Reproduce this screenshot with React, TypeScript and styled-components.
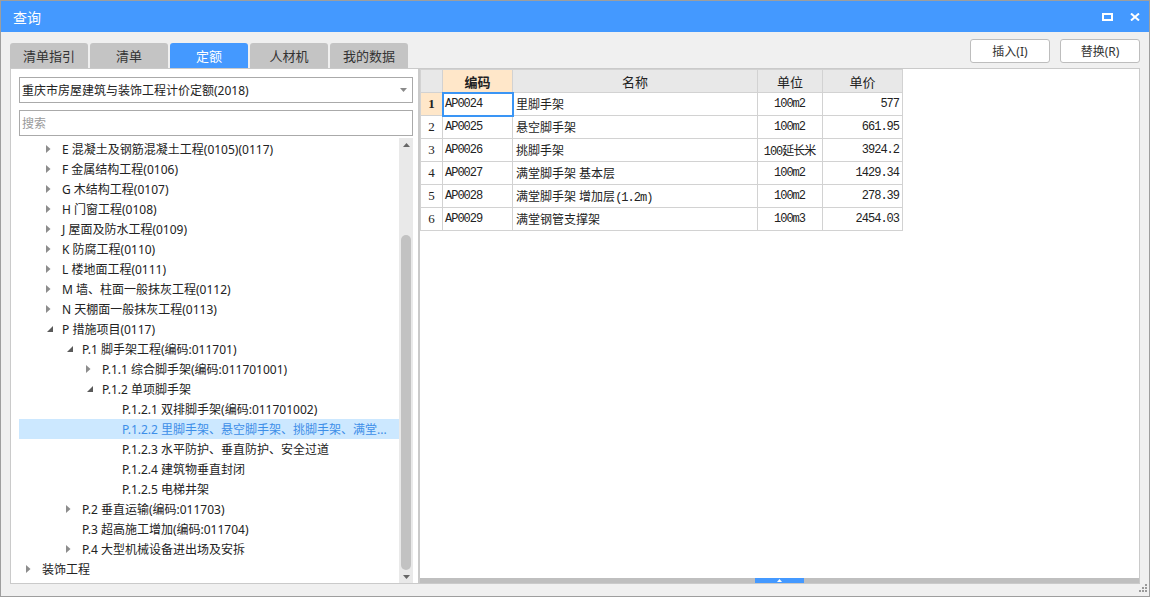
import React from "react";
import styled, { createGlobalStyle } from "styled-components";

const SANS = `"Noto Sans", "Noto Sans CJK SC", sans-serif`;
const MONO = `"Liberation Mono", "Noto Sans CJK SC", monospace`;

const GlobalStyle = createGlobalStyle`
  html, body {
    margin: 0;
    padding: 0;
    background: #ffffff;
  }
`;

const Window = styled.div`
  position: relative;
  width: 1150px;
  height: 597px;
  box-sizing: border-box;
  border: 1px solid #9e9e9e;
  background: #f0f0f0;
  display: flex;
  flex-direction: column;
  font-family: ${SANS};
  font-size: 12px;
  color: #333333;
`;

const TitleBar = styled.div`
  height: 31px;
  flex: none;
  background: #4499ff;
  color: #ffffff;
  display: flex;
  align-items: center;
  justify-content: space-between;
  padding: 0 9px 0 12px;
  font-size: 14px;
`;

const TitleButtons = styled.div`
  display: flex;
  align-items: center;
  gap: 17px;
`;

const Body = styled.div`
  flex: 1;
  min-height: 0;
  display: grid;
  grid-template-columns: 409px 721px;
  grid-template-rows: 36px 1fr;
  padding: 0 9px 12px 9px;
`;

const TabStrip = styled.div`
  align-self: end;
  display: flex;
  gap: 2px;
`;

const Tab = styled.div<{ $active?: boolean }>`
  width: 78px;
  height: 25px;
  border-radius: 3px 3px 0 0;
  background: ${(p) => (p.$active ? "#4499ff" : "#c4c4c4")};
  color: ${(p) => (p.$active ? "#ffffff" : "#333333")};
  display: flex;
  align-items: center;
  justify-content: center;
  font-size: 13px;
`;

const Toolbar = styled.div`
  display: flex;
  justify-content: flex-end;
  align-items: flex-start;
  gap: 10px;
  padding-top: 7px;
`;

const Button = styled.button`
  width: 80px;
  height: 24px;
  box-sizing: border-box;
  border: 1px solid #bdbdbd;
  border-radius: 3px;
  background: #ffffff;
  font-family: ${SANS};
  font-size: 12px;
  color: #333333;
  padding: 0;
`;

const LeftPanel = styled.div`
  box-sizing: border-box;
  min-height: 0;
  border: 1px solid #cacaca;
  background: #ffffff;
  padding: 8px 5px 0 8px;
  display: flex;
  flex-direction: column;
  overflow: hidden;
`;

const Select = styled.div`
  height: 26px;
  flex: none;
  box-sizing: border-box;
  border: 1px solid #aaaaaa;
  display: flex;
  align-items: center;
  justify-content: space-between;
  padding: 0 5px 0 2px;
  font-size: 12px;
  color: #222222;
`;

const Search = styled.input`
  height: 26px;
  flex: none;
  margin-top: 7px;
  box-sizing: border-box;
  width: 100%;
  border: 1px solid #aaaaaa;
  padding: 0 2px;
  font-family: ${SANS};
  font-size: 12px;
  outline: none;
  &::placeholder {
    color: #9a9a9a;
  }
`;

const TreeWrap = styled.div`
  flex: 1;
  min-height: 0;
  margin-top: 2px;
  display: flex;
`;

const TreeList = styled.div`
  flex: 1;
  min-width: 0;
  padding-top: 1px;
  overflow: hidden;
`;

const TreeRow = styled.div<{ $level: number; $selected?: boolean }>`
  height: 20px;
  display: flex;
  align-items: center;
  padding-left: ${(p) => 7 + p.$level * 20}px;
  background: ${(p) => (p.$selected ? "#cce8ff" : "transparent")};
  color: ${(p) => (p.$selected ? "#3d8ee8" : "#222222")};
  white-space: nowrap;
  font-size: 12px;
`;

const Arrow = styled.span`
  width: 16px;
  flex: none;
  display: flex;
  align-items: center;
`;

const VScroll = styled.div`
  width: 14px;
  flex: none;
  background: #e9e9e9;
  display: flex;
  flex-direction: column;
  align-items: center;
`;

const ScrollArrow = styled.div`
  height: 13px;
  flex: none;
  display: flex;
  align-items: center;
  justify-content: center;
`;

const VThumb = styled.div`
  width: 10px;
  flex: 1;
  margin-top: 84px;
  border-radius: 5px;
  background: #c2c2c2;
`;

const RightPanel = styled.div`
  box-sizing: border-box;
  min-height: 0;
  border: 1px solid #cacaca;
  background: #ffffff;
  display: flex;
  flex-direction: column;
`;

const GridArea = styled.div`
  flex: 1;
  min-height: 0;
  overflow: hidden;
`;

const HScroll = styled.div`
  height: 5px;
  flex: none;
  background: #bfbfbf;
  display: flex;
`;

const HThumb = styled.div`
  width: 49px;
  background: #4499ff;
  display: flex;
  align-items: center;
  justify-content: center;
`;

const Table = styled.table`
  border-collapse: collapse;
  table-layout: fixed;
  width: 482px;
`;

const Row = styled.tr`
  height: 23px;
`;

const HeadCell = styled.th<{ $key?: boolean }>`
  border: 1px solid #d2d2d2;
  background: ${(p) => (p.$key ? "#ffe7c9" : "#e8e8e8")};
  font-weight: ${(p) => (p.$key ? 700 : 400)};
  font-size: 13px;
  color: #222222;
  padding: 0;
  text-align: center;
`;

const NumCell = styled.td<{ $current?: boolean }>`
  border: 1px solid #d2d2d2;
  background: ${(p) => (p.$current ? "#ffe7c9" : "#ffffff")};
  font-family: "Liberation Serif", serif;
  font-weight: ${(p) => (p.$current ? 700 : 400)};
  font-size: 13px;
  text-align: center;
  padding: 0;
  color: #222222;
`;

const Cell = styled.td<{ $align?: string; $active?: boolean; $mono?: boolean }>`
  border: 1px solid #d2d2d2;
  padding: 0 3px 0 2px;
  text-align: ${(p) => p.$align || "left"};
  font-family: ${(p) => (p.$mono ? MONO : SANS)};
  font-size: 12px;
  letter-spacing: ${(p) => (p.$mono ? "-1px" : "0")};
  color: #222222;
  white-space: nowrap;
  overflow: hidden;
  outline: ${(p) => (p.$active ? "2px solid #3a95f5" : "none")};
  outline-offset: -1px;
`;

const NameText = styled.span`
  font-family: ${SANS};
  font-size: 12px;
  padding-left: 1px;
`;

const MonoText = styled.span`
  font-family: ${MONO};
  font-size: 12px;
  letter-spacing: -1px;
`;

const Grip = styled.svg`
  position: absolute;
  right: 1px;
  bottom: 3px;
`;

const Collapsed = () => (
  <svg width="5" height="8" viewBox="0 0 5 8">
    <polygon points="0,0 4.5,4 0,8" fill="#8c8c8c" />
  </svg>
);

const Expanded = () => (
  <svg width="7" height="6" viewBox="0 0 7 6" style={{ marginLeft: 1 }}>
    <polygon points="6,0 6,6 0,6" fill="#5a5a5a" />
  </svg>
);

type Node = { level: number; text: string; state?: "open" | "closed"; selected?: boolean };

const tree: Node[] = [
  { level: 1, text: "E 混凝土及钢筋混凝土工程(0105)(0117)", state: "closed" },
  { level: 1, text: "F 金属结构工程(0106)", state: "closed" },
  { level: 1, text: "G 木结构工程(0107)", state: "closed" },
  { level: 1, text: "H 门窗工程(0108)", state: "closed" },
  { level: 1, text: "J 屋面及防水工程(0109)", state: "closed" },
  { level: 1, text: "K 防腐工程(0110)", state: "closed" },
  { level: 1, text: "L 楼地面工程(0111)", state: "closed" },
  { level: 1, text: "M 墙、柱面一般抹灰工程(0112)", state: "closed" },
  { level: 1, text: "N 天棚面一般抹灰工程(0113)", state: "closed" },
  { level: 1, text: "P 措施项目(0117)", state: "open" },
  { level: 2, text: "P.1 脚手架工程(编码:011701)", state: "open" },
  { level: 3, text: "P.1.1 综合脚手架(编码:011701001)", state: "closed" },
  { level: 3, text: "P.1.2 单项脚手架", state: "open" },
  { level: 4, text: "P.1.2.1 双排脚手架(编码:011701002)" },
  { level: 4, text: "P.1.2.2 里脚手架、悬空脚手架、挑脚手架、满堂...", selected: true },
  { level: 4, text: "P.1.2.3 水平防护、垂直防护、安全过道" },
  { level: 4, text: "P.1.2.4 建筑物垂直封闭" },
  { level: 4, text: "P.1.2.5 电梯井架" },
  { level: 2, text: "P.2 垂直运输(编码:011703)", state: "closed" },
  { level: 2, text: "P.3 超高施工增加(编码:011704)" },
  { level: 2, text: "P.4 大型机械设备进出场及安拆", state: "closed" },
  { level: 0, text: "装饰工程", state: "closed" },
];

const rows = [
  { code: "AP0024", name: "里脚手架", unit: "100m2", price: "577" },
  { code: "AP0025", name: "悬空脚手架", unit: "100m2", price: "661.95" },
  { code: "AP0026", name: "挑脚手架", unit: "100延长米", price: "3924.2" },
  { code: "AP0027", name: "满堂脚手架 基本层", unit: "100m2", price: "1429.34" },
  { code: "AP0028", name: "满堂脚手架 增加层", extra: "(1.2m)", unit: "100m2", price: "278.39" },
  { code: "AP0029", name: "满堂钢管支撑架", unit: "100m3", price: "2454.03" },
];

const tabs = ["清单指引", "清单", "定额", "人材机", "我的数据"];

export default function App() {
  return (
    <>
      <GlobalStyle />
      <Window>
        <TitleBar>
          <span>查询</span>
          <TitleButtons>
            <svg width="11" height="8" viewBox="0 0 11 8">
              <rect x="1" y="1" width="9" height="6" fill="none" stroke="#fff" strokeWidth="2" />
            </svg>
            <svg width="10" height="8" viewBox="0 0 10 8">
              <path d="M1 0.5 L9 7.5 M9 0.5 L1 7.5" stroke="#fff" strokeWidth="2" />
            </svg>
          </TitleButtons>
        </TitleBar>
        <Body>
          <TabStrip>
            {tabs.map((t) => (
              <Tab key={t} $active={t === "定额"}>
                {t}
              </Tab>
            ))}
          </TabStrip>
          <Toolbar>
            <Button>插入(I)</Button>
            <Button>替换(R)</Button>
          </Toolbar>
          <LeftPanel>
            <Select>
              <span>重庆市房屋建筑与装饰工程计价定额(2018)</span>
              <svg width="7" height="4" viewBox="0 0 7 4">
                <polygon points="0,0 7,0 3.5,4" fill="#8a8a8a" />
              </svg>
            </Select>
            <Search placeholder="搜索" />
            <TreeWrap>
              <TreeList>
                {tree.map((n) => (
                  <TreeRow key={n.text} $level={n.level} $selected={n.selected}>
                    <Arrow>
                      {n.state === "closed" && <Collapsed />}
                      {n.state === "open" && <Expanded />}
                    </Arrow>
                    {n.text}
                  </TreeRow>
                ))}
              </TreeList>
              <VScroll>
                <ScrollArrow>
                  <svg width="7" height="4" viewBox="0 0 7 4">
                    <polygon points="0,4 7,4 3.5,0" fill="#666" />
                  </svg>
                </ScrollArrow>
                <VThumb />
                <ScrollArrow>
                  <svg width="7" height="4" viewBox="0 0 7 4">
                    <polygon points="0,0 7,0 3.5,4" fill="#666" />
                  </svg>
                </ScrollArrow>
              </VScroll>
            </TreeWrap>
          </LeftPanel>
          <RightPanel>
            <GridArea>
              <Table>
                <colgroup>
                  <col style={{ width: 22 }} />
                  <col style={{ width: 70 }} />
                  <col style={{ width: 245 }} />
                  <col style={{ width: 65 }} />
                  <col style={{ width: 80 }} />
                </colgroup>
                <thead>
                  <Row>
                    <HeadCell />
                    <HeadCell $key>编码</HeadCell>
                    <HeadCell>名称</HeadCell>
                    <HeadCell>单位</HeadCell>
                    <HeadCell>单价</HeadCell>
                  </Row>
                </thead>
                <tbody>
                  {rows.map((r, i) => (
                    <Row key={r.code}>
                      <NumCell $current={i === 0}>{i + 1}</NumCell>
                      <Cell $mono $active={i === 0}>
                        {r.code}
                      </Cell>
                      <Cell>
                        <NameText>{r.name}</NameText>
                        {r.extra && <MonoText>{r.extra}</MonoText>}
                      </Cell>
                      <Cell $mono $align="center">
                        {r.unit}
                      </Cell>
                      <Cell $mono $align="right">
                        {r.price}
                      </Cell>
                    </Row>
                  ))}
                </tbody>
              </Table>
            </GridArea>
            <HScroll>
              <HThumb style={{ marginLeft: 335 }}>
                <svg width="5" height="3" viewBox="0 0 5 3">
                  <polygon points="0,3 5,3 2.5,0" fill="#fff" />
                </svg>
              </HThumb>
            </HScroll>
          </RightPanel>
        </Body>
        <Grip width="9" height="9" viewBox="0 0 9 9">
          <rect x="6" y="0" width="2" height="2" fill="#9a9a9a" />
          <rect x="3" y="3" width="2" height="2" fill="#9a9a9a" />
          <rect x="6" y="3" width="2" height="2" fill="#9a9a9a" />
          <rect x="0" y="6" width="2" height="2" fill="#9a9a9a" />
          <rect x="3" y="6" width="2" height="2" fill="#9a9a9a" />
          <rect x="6" y="6" width="2" height="2" fill="#9a9a9a" />
        </Grip>
      </Window>
    </>
  );
}
